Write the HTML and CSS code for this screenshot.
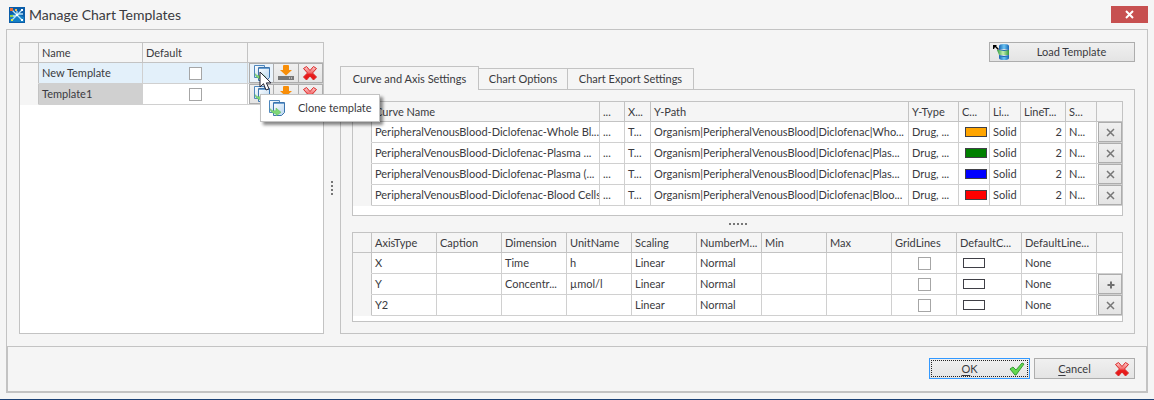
FILE: index.html
```
<!DOCTYPE html>
<html lang="en">
<head>
<meta charset="utf-8">
<title>Manage Chart Templates</title>
<link rel="stylesheet" href="styles.css">
</head>
<body>
<svg class="defs" aria-hidden="true">
  <defs>
    <linearGradient id="page" x1="0" y1="0" x2="1" y2="1"><stop offset="0" stop-color="#fff"/><stop offset="1" stop-color="#b5d3ee"/></linearGradient>
    <linearGradient id="red" x1="0" y1="0" x2="0" y2="1"><stop offset="0" stop-color="#ffd0d0"/><stop offset=".45" stop-color="#f46a6a"/><stop offset=".6" stop-color="#e81c1c"/><stop offset="1" stop-color="#e81414"/></linearGradient>
    <linearGradient id="blue" x1="0" y1="0" x2="1" y2="0"><stop offset="0" stop-color="#1765b4"/><stop offset=".5" stop-color="#6cc4f2"/><stop offset="1" stop-color="#1765b4"/></linearGradient>
    <linearGradient id="green" x1="0" y1="0" x2="1" y2="0"><stop offset="0" stop-color="#2f9a3f"/><stop offset=".5" stop-color="#c4f0b0"/><stop offset="1" stop-color="#2f9a3f"/></linearGradient>
    <symbol id="clone" viewBox="0 0 16 16">
      <path d="M.5.5h10v12H.5z" fill="url(#page)" stroke="#4d86bd"/>
      <path d="M4.500 2.500h11v10l-3 3h-8z" fill="url(#page)" stroke="#3c74ad"/>
      <path d="M5 3.500h10" stroke="#6ba0d2"/>
      <path d="M1 8.500c1 2 3 2.500 6 2.200V8l5 4.300L7 16v-2.500C4 13.800 1.500 12 1 8.500z" fill="#7fd877" stroke="#5bb955" stroke-width=".5"/>
    </symbol>
    <symbol id="save" viewBox="0 0 16 16">
      <path d="M6 0h4q1 0 1 1v4h3L8 10.500 2 5h3V1q0-1 1-1z" fill="#f88e08"/>
      <path d="M0 11h16v4H0z" fill="#777"/><path d="M11 13h1m1 0h1" stroke="#eee"/>
    </symbol>
    <symbol id="cross" viewBox="0 0 16 16">
      <path d="M1.500 3.500 4.500 1.500l3.500 4 3.500-4 3 2-4 4.500 4 4-3 3-3.500-4-3.500 4-3-3 4-4z" fill="url(#red)" stroke="#d92525" stroke-linejoin="round"/>
    </symbol>
    <symbol id="x" viewBox="0 0 9 9"><path d="m1 1 7 7M8 1 1 8" stroke="#777" stroke-width="1.500"/></symbol>
    <symbol id="plus" viewBox="0 0 9 9"><path d="M5 1.500v7M1.500 5h7" stroke="#707070" stroke-width="2"/></symbol>
  </defs>
</svg>
<div class="window">
  <header class="titlebar">
    <svg class="logo" viewBox="0 0 16 16" aria-hidden="true">
      <path d="M0 0h16v16H0z" fill="#0b5da8"/><path d="M1 8c4-2 9-1 14 2v5H1z" fill="#1680c4"/>
      <path d="M3 3l5 5 5-5M8 8l-5 5m5-5 5 5M2 9h4l2-1m0 0 3-1h3M8 8V4" fill="none" stroke="#b9e4f7" stroke-width="1.300"/>
      <path d="M7 7h2v2H7zm5-5h2v2h-2zm0 10h2v2h-2z" fill="#fff"/><path d="M1 1h3v3H1z" fill="#e86b35"/><path d="M6 2h2v2H6z" fill="#efc057"/><path d="M1 8h3v2H1z" fill="#90cf4a"/><path d="M2 12h2v2H2z" fill="#dfe950"/>
    </svg>
    <h1 class="title">Manage Chart Templates</h1>
    <button class="close" type="button" aria-label="Close"><svg viewBox="0 0 9 9" width="9" height="9"><path d="m1 1 7 7M8 1 1 8" stroke="#fff" stroke-width="2"/></svg></button>
  </header>
  <div class="frame">
    <main class="content">
      <section class="grid templates" aria-label="Templates">
        <table>
          <colgroup><col class="c19"><col class="c104"><col class="c105"><col class="c75"></colgroup>
          <thead><tr><th></th><th>Name</th><th>Default</th><th></th></tr></thead>
          <tbody>
            <tr class="active"><td></td><td>New Template</td><td class="center"><input type="checkbox" aria-label="New Template default"></td>
              <td class="tools"><div class="toolset">
                <button class="tool hot" type="button" aria-label="Clone template"><svg class="icon"><use href="#clone"/></svg></button><button class="tool" type="button" aria-label="Save template"><svg class="icon"><use href="#save"/></svg></button><button class="tool" type="button" aria-label="Delete template"><svg class="icon"><use href="#cross"/></svg></button>
                <svg class="cursor" viewBox="0 0 13 20" aria-hidden="true"><path d="M1 1v15l3.500-3.300L7 19l3-1.200-2.600-5.900H12z" fill="#fff" stroke="#223"/></svg>
                <div class="tooltip" role="tooltip"><svg class="icon" aria-hidden="true"><use href="#clone"/></svg><span>Clone template</span></div>
              </div></td></tr>
            <tr class="selected"><td></td><td>Template1</td><td class="center"><input type="checkbox" aria-label="Template1 default"></td>
              <td class="tools"><div class="toolset">
                <button class="tool" type="button" aria-label="Clone template"><svg class="icon"><use href="#clone"/></svg></button><button class="tool" type="button" aria-label="Save template"><svg class="icon"><use href="#save"/></svg></button><button class="tool" type="button" aria-label="Delete template"><svg class="icon"><use href="#cross"/></svg></button>
              </div></td></tr>
          </tbody>
        </table>
      </section>
      <div class="splitter vertical" aria-hidden="true"><i></i><i></i><i></i><i></i></div>
      <section class="details">
        <button class="button load" type="button">
          <svg class="icon" viewBox="0 0 16 16" aria-hidden="true">
            <path d="M6 2q0-2 5-2t5 2v3H6z" fill="url(#blue)"/><path d="M6 12h10v2q0 2-5 2t-5-2z" fill="url(#blue)"/><path d="M4 6h12v5H6z" fill="url(#green)"/><path d="M6 5.500q5 2 10 0M6 11.500q5 2 10 0" fill="none" stroke="#1765b4"/>
            <path d="M0 1h4L3 2l3 3-1 1-3-3-1 2H0z" fill="#000"/>
          </svg>
          <span>Load Template</span>
        </button>
        <div class="tabs" role="tablist">
          <button class="tab current" type="button" role="tab" aria-selected="true">Curve and Axis Settings</button>
          <button class="tab" type="button" role="tab">Chart Options</button>
          <button class="tab last" type="button" role="tab">Chart Export Settings</button>
        </div>
        <div class="panel" role="tabpanel">
          <div class="grid curves">
            <table>
              <colgroup><col class="c19"><col class="c228"><col class="c25"><col class="c26"><col class="c258"><col class="c50"><col class="c31"><col class="c31"><col class="c45"><col class="c31"><col class="c25"></colgroup>
              <thead><tr><th></th><th>Curve Name</th><th>...</th><th>X...</th><th>Y-Path</th><th>Y-Type</th><th>C...</th><th>Li...</th><th>LineT...</th><th>S...</th><th></th></tr></thead>
              <tbody>
                <tr><td></td><td>PeripheralVenousBlood-Diclofenac-Whole Bl...</td><td>...</td><td>T...</td><td>Organism|PeripheralVenousBlood|Diclofenac|Who...</td><td>Drug, ...</td><td class="colour"><span class="swatch orange"></span></td><td>Solid</td><td class="number">2</td><td>N...</td><td class="action"><button class="mini" type="button" aria-label="Remove"><svg><use href="#x"/></svg></button></td></tr>
                <tr><td></td><td>PeripheralVenousBlood-Diclofenac-Plasma ...</td><td>...</td><td>T...</td><td>Organism|PeripheralVenousBlood|Diclofenac|Plas...</td><td>Drug, ...</td><td class="colour"><span class="swatch green"></span></td><td>Solid</td><td class="number">2</td><td>N...</td><td class="action"><button class="mini" type="button" aria-label="Remove"><svg><use href="#x"/></svg></button></td></tr>
                <tr><td></td><td>PeripheralVenousBlood-Diclofenac-Plasma (...</td><td>...</td><td>T...</td><td>Organism|PeripheralVenousBlood|Diclofenac|Plas...</td><td>Drug, ...</td><td class="colour"><span class="swatch blue"></span></td><td>Solid</td><td class="number">2</td><td>N...</td><td class="action"><button class="mini" type="button" aria-label="Remove"><svg><use href="#x"/></svg></button></td></tr>
                <tr><td></td><td>PeripheralVenousBlood-Diclofenac-Blood Cells</td><td>...</td><td>T...</td><td>Organism|PeripheralVenousBlood|Diclofenac|Bloo...</td><td>Drug, ...</td><td class="colour"><span class="swatch red"></span></td><td>Solid</td><td class="number">2</td><td>N...</td><td class="action"><button class="mini" type="button" aria-label="Remove"><svg><use href="#x"/></svg></button></td></tr>
              </tbody>
            </table>
          </div>
          <div class="splitter" aria-hidden="true"><i></i><i></i><i></i><i></i><i></i></div>
          <div class="grid axes">
            <table>
              <colgroup><col class="c19"><col class="c65" span="10"><col class="c75"><col class="c25"></colgroup>
              <thead><tr><th></th><th>AxisType</th><th>Caption</th><th>Dimension</th><th>UnitName</th><th>Scaling</th><th>NumberM...</th><th>Min</th><th>Max</th><th>GridLines</th><th>DefaultC...</th><th>DefaultLine...</th><th></th></tr></thead>
              <tbody>
                <tr><td></td><td>X</td><td></td><td>Time</td><td>h</td><td>Linear</td><td>Normal</td><td></td><td></td><td class="center"><input type="checkbox" aria-label="X grid lines"></td><td class="colour"><span class="swatch"></span></td><td>None</td><td></td></tr>
                <tr><td></td><td>Y</td><td></td><td>Concentr...</td><td>µmol/l</td><td>Linear</td><td>Normal</td><td></td><td></td><td class="center"><input type="checkbox" aria-label="Y grid lines"></td><td class="colour"><span class="swatch"></span></td><td>None</td><td class="action"><button class="mini" type="button" aria-label="Add axis"><svg><use href="#plus"/></svg></button></td></tr>
                <tr><td></td><td>Y2</td><td></td><td></td><td></td><td>Linear</td><td>Normal</td><td></td><td></td><td class="center"><input type="checkbox" aria-label="Y2 grid lines"></td><td class="colour"><span class="swatch"></span></td><td>None</td><td class="action"><button class="mini" type="button" aria-label="Remove axis"><svg><use href="#x"/></svg></button></td></tr>
              </tbody>
            </table>
          </div>
        </div>
      </section>
    </main>
    <footer class="footer">
      <button class="button ok" type="button"><span><u>O</u>K</span>
        <svg class="icon" viewBox="0 0 16 16" aria-hidden="true"><path d="m1 8 3-2 3 3 6-7 2 1-8 11H6z" fill="#62d84e" stroke="#389a35" stroke-linejoin="round"/></svg></button>
      <button class="button cancel" type="button"><span><u>C</u>ancel</span><svg class="icon" aria-hidden="true"><use href="#cross"/></svg></button>
    </footer>
  </div>
</div>
</body>
</html>
```
FILE: styles.css
```
* { box-sizing: border-box; }

body {
  margin: 0;
  background: #f5f5f5;
  color: #3a3a40;
  font: 11px/14px Lato, Tahoma, Roboto, sans-serif;
}

button { font: inherit; color: inherit; padding: 0; }
.defs { position: absolute; width: 0; height: 0; }
.icon { display: block; width: 16px; height: 16px; flex: none; }

.window {
  min-height: 100vh;
  display: flex;
  flex-direction: column;
  padding: 0 6px 6px;
  border-bottom: 1px solid #1c4175;
}

/* Title bar */
.titlebar { display: flex; align-items: center; height: 29px; padding-left: 3px; }
.logo { width: 16px; height: 16px; margin-right: 4px; }
.title { margin: 0; flex: 1; font-size: 14px; line-height: 20px; font-weight: 400; }
.close { width: 37px; height: 17px; border: 0; background: #c75050; display: grid; place-items: center; }

.frame { flex: 1; display: flex; flex-direction: column; border: 1px solid #c3c3c3; }
.content { flex: 1; display: flex; padding: 12px; }

/* Data grids */
.grid { border: 1px solid #c3c3c3; background: #fff; }
.templates { flex: 303 1 0; }
.details { flex: 795 1 0; min-width: 0; display: flex; flex-direction: column; }
.curves { padding-bottom: 9px; flex: 1; }
.axes { padding-bottom: 5px; }

table { width: 100%; table-layout: fixed; border-collapse: separate; border-spacing: 0; }
th, td {
  height: 21px;
  padding: 0 0 0 3px;
  border-right: 1px solid #d0d0d0;
  border-bottom: 1px solid #d0d0d0;
  text-align: left;
  font-weight: 400;
  white-space: nowrap;
  overflow: hidden;
}
th { height: 20px; background: #f5f5f5; border-color: #c3c3c3; }
td:first-child { background: #f5f5f5; border-bottom-color: #f5f5f5; border-right-color: #c3c3c3; }
th:last-child, td:last-child { border-right: 0; }
.center { text-align: center; padding: 0; }
.number { text-align: right; padding-right: 3px; }
.colour { padding-left: 6px; }

.c19 { width: 19px; } .c25 { width: 25px; } .c26 { width: 26px; } .c31 { width: 31px; }
.c45 { width: 45px; } .c50 { width: 50px; } .c65 { width: 65px; } .c75 { width: 75px; }
.c104 { width: 104px; } .c105 { width: 105px; } .c228 { width: 228px; } .c258 { width: 258px; }

.active td:not(:first-child) { background: #e3f0fa; }
.selected td:nth-child(2) { background: #d0d0d0; }

input[type="checkbox"] {
  appearance: none;
  display: block;
  width: 13px;
  height: 13px;
  margin: 0 auto;
  border: 1px solid #a6a6a6;
  background: #fff;
}

.swatch { display: block; width: 22px; height: 10px; border: 1px solid #3f3f46; background: #fff; }
.orange { background: #ffa500; }
.green { background: #008000; }
.blue { background: #0000ff; }
.red { background: #ff0000; }

td.tools { padding: 0 0 0 1px; overflow: visible; }
.toolset { position: relative; display: flex; }
.tool {
  flex: 1;
  height: 20px;
  display: grid;
  place-items: center;
  border: 1px solid #adadad;
  background: linear-gradient(#f0f0f0, #e4e4e4);
}
.tool + .tool { border-left: 0; }
.tool.hot { background: #eaf3fb; }
.cursor { position: absolute; left: 10px; top: 8px; width: 13px; height: 20px; z-index: 3; }
.tooltip {
  position: absolute;
  left: 11px;
  top: 31px;
  z-index: 2;
  display: flex;
  align-items: center;
  gap: 13px;
  width: 120px;
  height: 28px;
  padding-left: 8px;
  border: 1px solid #c3c3c3;
  background: #fff;
  box-shadow: 3px 3px 3px #0007;
}

td.action { padding: 0 0 0 1px; }
.mini {
  display: grid;
  place-items: center;
  width: 100%;
  height: 20px;
  border: 1px solid #adadad;
  background: linear-gradient(#f0f0f0, #e4e4e4);
}
.mini svg { width: 9px; height: 9px; }

/* Splitters */
.splitter { display: flex; justify-content: center; align-items: center; gap: 2px; height: 16px; }
.splitter i { width: 2px; height: 2px; background: #777; }
.splitter.vertical { flex: none; flex-direction: column; width: 16px; height: auto; }

/* Tabs */
.tabs { position: relative; z-index: 1; display: flex; align-items: flex-end; margin-top: 4px; }
.tab { height: 22px; border: 1px solid #c3c3c3; border-left: 0; background: #f5f5f5; width: 89px; white-space: nowrap; }
.tab.last { width: 126px; }
.tab.current { width: 139px; height: 24px; border-left: 1px solid #c3c3c3; border-bottom: 0; }
.panel { flex: 1; display: flex; flex-direction: column; margin-top: -1px; padding: 11px; border: 1px solid #c3c3c3; }

/* Push buttons */
.button {
  display: flex;
  align-items: center;
  border: 1px solid #adadad;
  background: linear-gradient(#f0f0f0, #e4e4e4);
}
.button span { flex: 1; text-align: center; }
.load { align-self: flex-end; width: 146px; height: 20px; padding-left: 3px; }

.footer { display: flex; justify-content: flex-end; gap: 4px; padding: 11px 11px 12px; border: 1px solid #c3c3c3; }
.footer .button { width: 101px; height: 21px; padding-right: 4px; }
.footer .ok { border-color: #3399ff; outline: 1px dotted #222; outline-offset: -3px; }
u { text-underline-offset: 2px; }
```
